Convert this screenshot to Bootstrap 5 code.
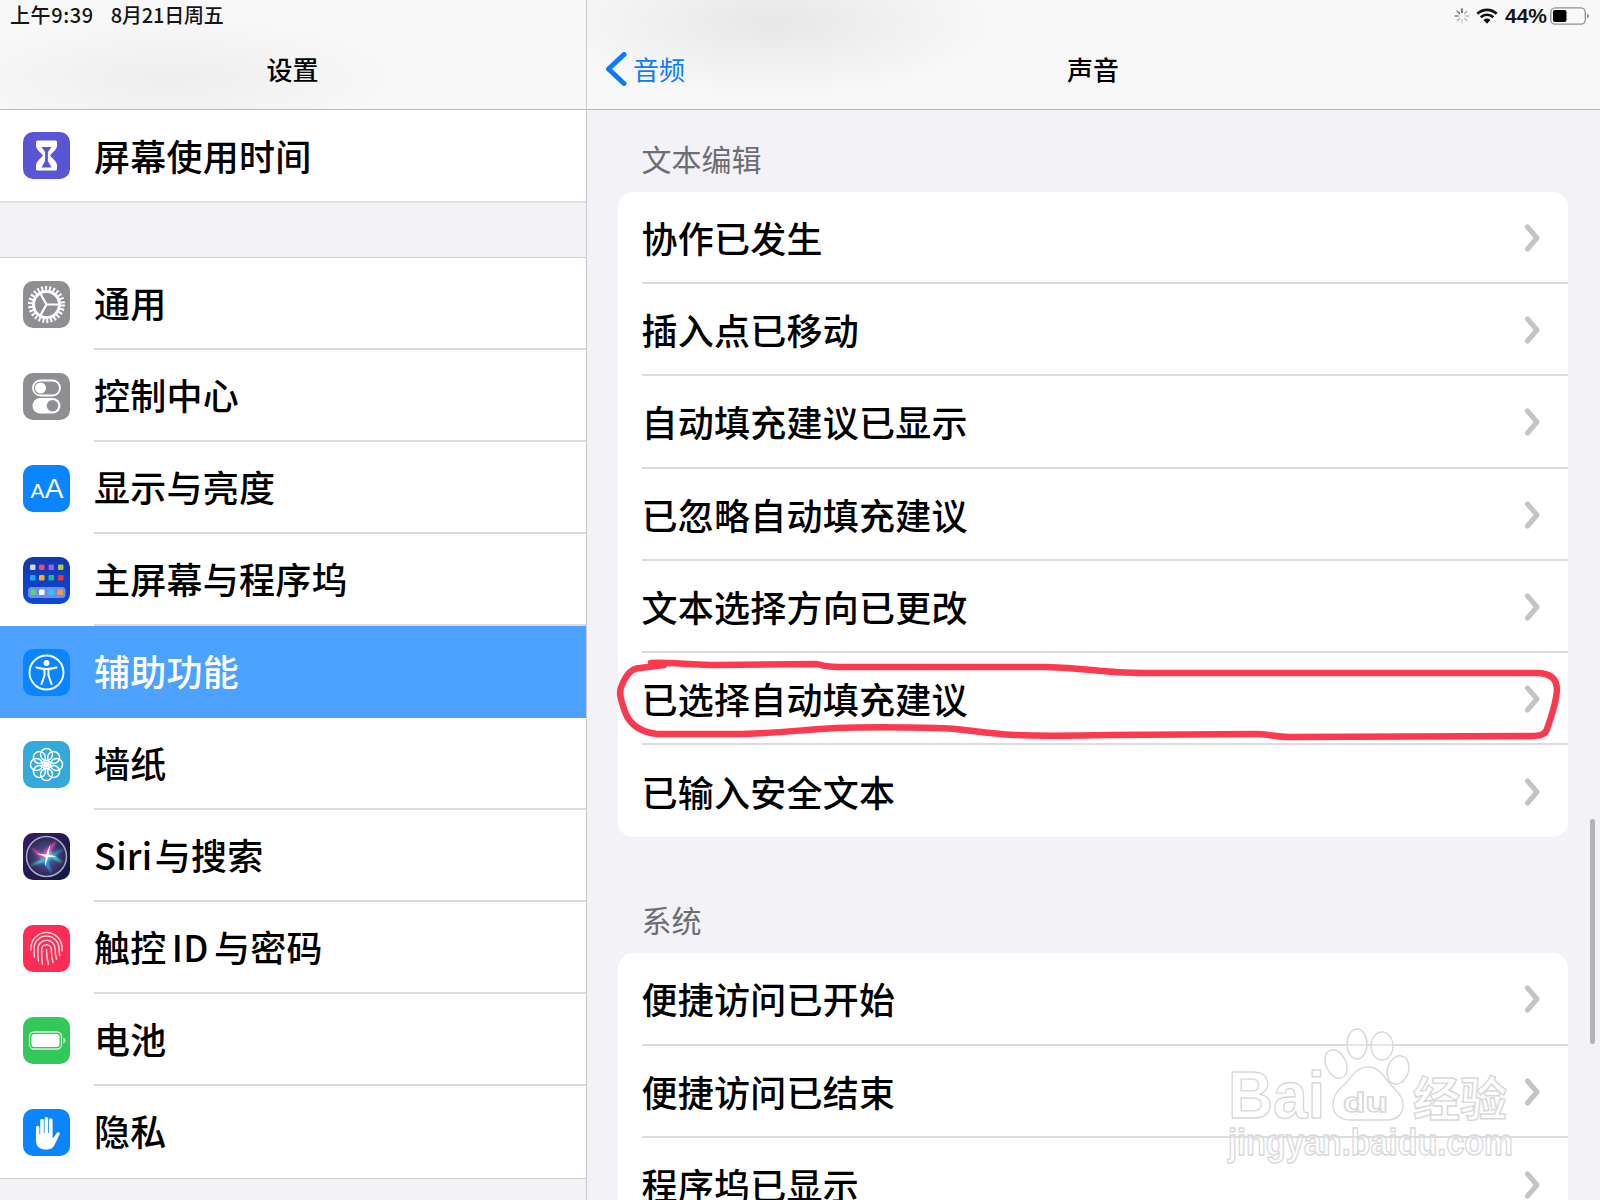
<!DOCTYPE html>
<html lang="zh-CN">
<head>
<meta charset="utf-8">
<title>声音</title>
<link href="https://cdn.jsdelivr.net/npm/bootstrap@5.3.0/dist/css/bootstrap.min.css" rel="stylesheet">
<style>
html,body{margin:0;height:1200px;overflow:hidden;background:#f2f2f7;}
body{font-family:"Noto Sans CJK SC","Liberation Sans",sans-serif;color:#000;}
.stage{width:1600px;height:1200px;overflow:hidden;}
.side{width:587px;height:1200px;border-right:1px solid #c9c9cd;background:#f2f2f7;flex-shrink:0;}
.detail{width:1013px;height:1200px;background:#f2f2f7;}
.bar{height:110px;border-bottom:1px solid #b9b9bd;background-color:#f8f8f9;flex-shrink:0;}
.side .bar{background-image:radial-gradient(ellipse 230px 60px at 170px 78px,#eeeeee,rgba(248,248,249,0));}
.detail .bar{background-image:radial-gradient(ellipse 220px 75px at 185px 22px,#e7e7e7,rgba(248,248,249,0));}
.stat{height:31px;padding:0 10px;font-size:20px;line-height:29px;font-weight:500;color:#161616;}
.stat-time{letter-spacing:.6px;}
.stat-gap{margin-left:17px;letter-spacing:-.2px;}
.stat-wifi{margin-left:6px;}
.stat-pct{font-family:"Liberation Sans",sans-serif;font-weight:700;font-size:21px;margin-left:7px;margin-right:3px;}
.bar-title{height:78px;font-size:26px;font-weight:500;line-height:76px;padding-right:1px;}
.back{left:18px;top:0;color:#0a7aff;font-weight:400;gap:6px;}
.set-group{border-radius:0;background:#fff;flex-shrink:0;}
.set-group .list-group-item,.sheet .list-group-item{background:transparent;border:0;padding:0;height:92px;border-radius:0;font-size:36px;font-weight:500;color:#000;letter-spacing:.25px;}
.sheet .list-group-item{height:92.2px;}
.set-group .list-group-item.on{background:#4da2ff;color:#fff;}
.ico{width:47px;height:47px;margin:0 24px 0 23px;flex-shrink:0;display:block;}
.cell{height:100%;border-bottom:2px solid #dcdcde;line-height:90px;white-space:nowrap;word-spacing:-3px;}
.set-group .cell{line-height:88px;}
.set-group .list-group-item:last-child .cell{border-bottom:0;}
.tight{word-spacing:-6px;}
.group-top .list-group-item{height:91px;}
.group-top .cell{line-height:90px;}
.group-top{border-bottom:2px solid #dfdfe2;}
.group-main{margin-top:54px;border-top:1px solid #cfcfd3;border-bottom:1px solid #cfcfd3;}
.sheet{margin:0 32px 0 31px;background:#fff;border-radius:15px;overflow:hidden;flex-shrink:0;}
.sheet.cut{border-bottom-left-radius:0;border-bottom-right-radius:0;}
.sheet .cell{margin-left:23.5px;padding-right:28px;}
.sheet .list-group-item:last-child .cell{border-bottom:0;}
.sheet-head{height:40px;line-height:40px;margin:28px 0 14px 54.5px;font-size:30px;color:#6d6d72;flex-shrink:0;}
.sheet-head.far{margin-top:62px;}
.nub{width:16px;height:28px;flex-shrink:0;margin-top:2px;}
.overlay{left:0;top:0;width:1600px;height:1200px;pointer-events:none;}
.scroller{left:1590px;top:819px;width:5px;height:225px;background:#b3b3b7;border-radius:3px;}
.wm{fill:rgba(255,255,255,.25);stroke:#d8d8da;stroke-width:1.4;}
.wm-t{font-family:"Liberation Sans","Noto Sans CJK SC",sans-serif;font-weight:700;}
.aa{font-family:"Liberation Sans",sans-serif;fill:#fff;}
</style>
</head>
<body>
<div class="stage d-flex position-relative">
  <div class="side d-flex flex-column">
    <div class="bar">
      <div class="stat d-flex"><span class="stat-time">上午9:39</span><span class="stat-gap">8月21日周五</span></div>
      <div class="bar-title text-center">设置</div>
    </div>
    <div class="list-group set-group group-top">
      <div class="list-group-item d-flex align-items-center">
        <svg class="ico" viewBox="0 0 47 47"><rect width="47" height="47" rx="10" fill="#5856d6"/><path fill="#fff" d="M14.5 8.5h18a1.5 1.5 0 0 1 1.5 1.500v3.500c0 4.500-5 7-7 10 2 3 7 5.500 7 10v3.500a1.500 1.500 0 0 1-1.500 1.500h-18a1.500 1.500 0 0 1-1.500-1.500v-3.500c0-4.500 5-7 7-10-2-3-7-5.500-7-10v-3.500a1.500 1.500 0 0 1 1.500-1.500z"/><path fill="#5856d6" d="M18.500 15h10l-3.600 5v9l3.600 6.500h-10l3.600-6.500v-9z"/></svg>
        <div class="cell flex-grow-1">屏幕使用时间</div>
      </div>
    </div>
    <div class="list-group set-group group-main">
      <div class="list-group-item d-flex align-items-center">
        <svg class="ico" viewBox="0 0 47 47"><rect width="47" height="47" rx="10" fill="#8e8e93"/><circle cx="23.500" cy="23.500" r="16" fill="none" stroke="#fff" stroke-width="5" stroke-dasharray="2 1.870"/><circle cx="23.500" cy="23.500" r="13" fill="none" stroke="#fff" stroke-width="3"/><path fill="none" stroke="#fff" stroke-width="2.200" d="M23.500 23.500H37M23.500 23.500L17 12M23.500 23.500L17 35"/></svg>
        <div class="cell flex-grow-1">通用</div>
      </div>
      <div class="list-group-item d-flex align-items-center">
        <svg class="ico" viewBox="0 0 47 47"><rect width="47" height="47" rx="10" fill="#8e8e93"/><rect x="10" y="7.500" width="27" height="15" rx="7.500" fill="none" stroke="#fff" stroke-width="1.800"/><circle cx="17.500" cy="15" r="5.500" fill="#fff"/><rect x="9.500" y="25" width="28" height="15.500" rx="7.750" fill="#fff"/><circle cx="29.500" cy="32.750" r="5.700" fill="#8e8e93"/></svg>
        <div class="cell flex-grow-1">控制中心</div>
      </div>
      <div class="list-group-item d-flex align-items-center">
        <svg class="ico" viewBox="0 0 47 47"><rect width="47" height="47" rx="10" fill="#0a84ff"/><text class="aa" x="7.500" y="33" font-size="21">A</text><text class="aa" x="21.700" y="33" font-size="28">A</text></svg>
        <div class="cell flex-grow-1">显示与亮度</div>
      </div>
      <div class="list-group-item d-flex align-items-center">
        <svg class="ico" viewBox="0 0 47 47"><defs><linearGradient id="dk" x1="0" y1="0" x2="0" y2="1"><stop offset="0" stop-color="#1438a8"/><stop offset="1" stop-color="#0b48e0"/></linearGradient></defs><rect width="47" height="47" rx="10" fill="url(#dk)"/><rect x="7" y="7.500" width="5.500" height="5.500" rx="1.300" fill="#d5d5dc"/><rect x="16" y="7.500" width="5.500" height="5.500" rx="1.300" fill="#f2496b"/><rect x="25.500" y="7.500" width="5.500" height="5.500" rx="1.300" fill="#a45cf0"/><rect x="35" y="7.500" width="5.500" height="5.500" rx="1.300" fill="#a6cc3a"/><rect x="7" y="18" width="5.500" height="5.500" rx="1.300" fill="#15a8ee"/><rect x="16" y="18" width="5.500" height="5.500" rx="1.300" fill="#f5b50f"/><rect x="25.500" y="18" width="5.500" height="5.500" rx="1.300" fill="#16c08c"/><rect x="35" y="18" width="5.500" height="5.500" rx="1.300" fill="#f0323a"/><rect x="5" y="30" width="37.500" height="11" rx="3.500" fill="#6f8fdc"/><rect x="7.500" y="32.500" width="5.500" height="5.500" rx="1.300" fill="#55d96a"/><rect x="16" y="32.500" width="5.500" height="5.500" rx="1.300" fill="#fff"/><rect x="25.500" y="32.500" width="5.500" height="5.500" rx="1.300" fill="#2cc4f0"/><rect x="34.500" y="32.500" width="5.500" height="5.500" rx="1.300" fill="#f0994a"/></svg>
        <div class="cell flex-grow-1">主屏幕与程序坞</div>
      </div>
      <div class="list-group-item on d-flex align-items-center">
        <svg class="ico" viewBox="0 0 47 47"><rect width="47" height="47" rx="10" fill="#0a84ff"/><circle cx="23.500" cy="23.500" r="17" fill="none" stroke="#fff" stroke-width="1.900"/><circle cx="23.500" cy="14" r="2.900" fill="#fff"/><path fill="none" stroke="#fff" stroke-width="2.100" stroke-linecap="round" stroke-linejoin="round" d="M13.500 18.500c3.500 1 6.500 1.500 10 1.500s6.500-.5 10-1.500M21.500 20v6.500L18.500 35M25.500 20v6.500L28.500 35"/></svg>
        <div class="cell flex-grow-1 border-0">辅助功能</div>
      </div>
      <div class="list-group-item d-flex align-items-center">
        <svg class="ico" viewBox="0 0 47 47"><rect width="47" height="47" rx="10" fill="#35a9dc"/><g fill="none" stroke="#fff" stroke-width="1.500"><circle cx="23.500" cy="23.500" r="2.500" fill="#fff"/><circle cx="23.500" cy="13.500" r="6"/><circle cx="23.500" cy="33.500" r="6"/><circle cx="13.500" cy="23.500" r="6"/><circle cx="33.500" cy="23.500" r="6"/><circle cx="16.400" cy="16.400" r="6"/><circle cx="30.600" cy="16.400" r="6"/><circle cx="16.400" cy="30.600" r="6"/><circle cx="30.600" cy="30.600" r="6"/></g></svg>
        <div class="cell flex-grow-1">墙纸</div>
      </div>
      <div class="list-group-item d-flex align-items-center">
        <svg class="ico" viewBox="0 0 47 47"><defs><linearGradient id="sb" x1="0" y1="0" x2="1" y2="1"><stop offset="0" stop-color="#3b1a66"/><stop offset="1" stop-color="#0e1b3d"/></linearGradient><radialGradient id="sc"><stop offset="0" stop-color="#5a6aa0"/><stop offset="1" stop-color="#2c2254"/></radialGradient><filter id="sf" x="-20%" y="-20%" width="140%" height="140%"><feGaussianBlur stdDeviation=".9"/></filter></defs><rect width="47" height="47" rx="10" fill="url(#sb)"/><circle cx="23.500" cy="23.500" r="20" fill="url(#sc)" stroke="#a9a9c4" stroke-width="1.500"/><g filter="url(#sf)"><path fill="#ec45a8" d="M7 14l17 9.500-6 2zM34 7l-9 17-6-4z"/><path fill="#35e0cc" d="M6 33l18-9.500 3 4zM40 30L23.500 23.500l4-5z"/><path fill="#3f9ff0" d="M29 41l-5.500-17.500-5 3zM42 15l-18.500 8.500 3 3z"/></g><path fill="#fff" d="M27.500 11l-2 10.500 8 2-8.500 1-3 9 .5-9.500-9-3.500 9.500 1z"/></svg>
        <div class="cell flex-grow-1 tight">Siri 与搜索</div>
      </div>
      <div class="list-group-item d-flex align-items-center">
        <svg class="ico" viewBox="0 0 47 47"><rect width="47" height="47" rx="10" fill="#ff2d55"/><g fill="none" stroke="#fbd5dc" stroke-width="1.500" stroke-linecap="round"><path d="M23.500 24.500c0 5 .5 10 2 15"/><path d="M19.500 39c-1-5-.8-10-.8-14.500a4.800 4.800 0 0 1 9.600 0c0 4 .3 8 1.700 13"/><path d="M15.500 36c-.5-4-.7-8-.7-12a8.700 8.700 0 0 1 17.400 0c0 4 .4 7 1.300 10"/><path d="M11.500 32c-.4-3-.5-6-.5-8.500a12.500 12.500 0 0 1 25 0c0 2.500.2 5 .7 7"/><path d="M8 25v-2a15.500 15.500 0 0 1 31 0v3"/></g></svg>
        <div class="cell flex-grow-1">触控 ID 与密码</div>
      </div>
      <div class="list-group-item d-flex align-items-center">
        <svg class="ico" viewBox="0 0 47 47"><rect width="47" height="47" rx="10" fill="#34c759"/><rect x="6.500" y="15" width="32" height="17" rx="4.500" fill="none" stroke="#d6f3dd" stroke-width="1.300"/><rect x="8.500" y="17" width="28" height="13" rx="3" fill="#fff"/><path fill="#d6f3dd" d="M40.500 20.500c1.200.6 1.800 1.800 1.800 3s-.6 2.400-1.800 3z"/></svg>
        <div class="cell flex-grow-1">电池</div>
      </div>
      <div class="list-group-item d-flex align-items-center">
        <svg class="ico" viewBox="0 0 47 47"><rect width="47" height="47" rx="10" fill="#0a84ff"/><path fill="#fff" d="M13 18.500a1.700 1.700 0 0 1 3.400 0V25h.8V11.500a1.800 1.800 0 0 1 3.600 0V24h.8V9.800a1.800 1.800 0 0 1 3.600 0V24h.8V11a1.800 1.800 0 0 1 3.600 0v17c0 .8.700 1 1.200.4l2.500-3.900c.8-1.200 1.800-1.600 2.800-1.100.9.500.8 1.500.2 2.500L31.500 36c-1.500 3-4 4.500-7.500 4.500h-2.500c-5 0-8.500-3.500-8.500-9z"/></svg>
        <div class="cell flex-grow-1">隐私</div>
      </div>
    </div>
  </div>

  <div class="detail d-flex flex-column">
    <div class="bar">
      <div class="stat d-flex align-items-center justify-content-end">
        <svg width="16" height="16" viewBox="0 0 16 16"><g stroke="#8e8e8e" stroke-width="1.300" stroke-linecap="round"><path d="M8 1v3.500" stroke="#333"/><path d="M12.900 3.100l-2.400 2.400" stroke="#aaa"/><path d="M15 8h-3.500" stroke="#bbb"/><path d="M12.900 12.900l-2.400-2.400" stroke="#bbb"/><path d="M8 15v-3.500" stroke="#ccc"/><path d="M3.100 12.900l2.400-2.400" stroke="#aaa"/><path d="M1 8h3.500" stroke="#888"/><path d="M3.100 3.100l2.400 2.400" stroke="#666"/></g></svg>
        <svg width="22" height="16" viewBox="0 0 22 16" class="stat-wifi"><g fill="none" stroke="#111" stroke-width="2.600"><path d="M1.300 5.800a14 14 0 0 1 19.400 0"/><path d="M4.700 9.200a9.200 9.200 0 0 1 12.600 0"/></g><path fill="#111" d="M7.500 12a5 5 0 0 1 7 0L11 15.800z"/></svg>
        <span class="stat-pct">44%</span>
        <svg width="40" height="18" viewBox="0 0 40 18"><rect x=".8" y=".8" width="34.500" height="16.400" rx="4.500" fill="none" stroke="#8f8f8f" stroke-width="1.300"/><rect x="3" y="3" width="13.500" height="12" rx="2" fill="#000"/><path fill="#8f8f8f" d="M37 6.500c1.200.4 1.800 1.400 1.800 2.500s-.6 2.100-1.800 2.500z"/></svg>
      </div>
      <div class="bar-title text-center position-relative">
        <div class="back position-absolute d-flex align-items-center">
          <svg width="22" height="34" viewBox="0 0 22 34"><path d="M19 2.500L3.500 17 19 31.500" fill="none" stroke="#0a7aff" stroke-width="5" stroke-linecap="round" stroke-linejoin="round"/></svg>
          <span>音频</span>
        </div>
        声音
      </div>
    </div>

    <div class="sheet-head">文本编辑</div>
    <div class="sheet list-group">
      <div class="list-group-item"><div class="cell d-flex align-items-center justify-content-between"><span>协作已发生</span><svg class="nub" viewBox="0 0 16 28"><path d="M3.500 3l9.500 11-9.500 11" fill="none" stroke="#c4c4c7" stroke-width="5" stroke-linecap="round" stroke-linejoin="round"/></svg></div></div>
      <div class="list-group-item"><div class="cell d-flex align-items-center justify-content-between"><span>插入点已移动</span><svg class="nub" viewBox="0 0 16 28"><path d="M3.500 3l9.500 11-9.500 11" fill="none" stroke="#c4c4c7" stroke-width="5" stroke-linecap="round" stroke-linejoin="round"/></svg></div></div>
      <div class="list-group-item"><div class="cell d-flex align-items-center justify-content-between"><span>自动填充建议已显示</span><svg class="nub" viewBox="0 0 16 28"><path d="M3.500 3l9.500 11-9.500 11" fill="none" stroke="#c4c4c7" stroke-width="5" stroke-linecap="round" stroke-linejoin="round"/></svg></div></div>
      <div class="list-group-item"><div class="cell d-flex align-items-center justify-content-between"><span>已忽略自动填充建议</span><svg class="nub" viewBox="0 0 16 28"><path d="M3.500 3l9.500 11-9.500 11" fill="none" stroke="#c4c4c7" stroke-width="5" stroke-linecap="round" stroke-linejoin="round"/></svg></div></div>
      <div class="list-group-item"><div class="cell d-flex align-items-center justify-content-between"><span>文本选择方向已更改</span><svg class="nub" viewBox="0 0 16 28"><path d="M3.500 3l9.500 11-9.500 11" fill="none" stroke="#c4c4c7" stroke-width="5" stroke-linecap="round" stroke-linejoin="round"/></svg></div></div>
      <div class="list-group-item"><div class="cell d-flex align-items-center justify-content-between"><span>已选择自动填充建议</span><svg class="nub" viewBox="0 0 16 28"><path d="M3.500 3l9.500 11-9.500 11" fill="none" stroke="#c4c4c7" stroke-width="5" stroke-linecap="round" stroke-linejoin="round"/></svg></div></div>
      <div class="list-group-item"><div class="cell d-flex align-items-center justify-content-between"><span>已输入安全文本</span><svg class="nub" viewBox="0 0 16 28"><path d="M3.500 3l9.500 11-9.500 11" fill="none" stroke="#c4c4c7" stroke-width="5" stroke-linecap="round" stroke-linejoin="round"/></svg></div></div>
    </div>

    <div class="sheet-head far">系统</div>
    <div class="sheet cut list-group">
      <div class="list-group-item"><div class="cell d-flex align-items-center justify-content-between"><span>便捷访问已开始</span><svg class="nub" viewBox="0 0 16 28"><path d="M3.500 3l9.500 11-9.500 11" fill="none" stroke="#c4c4c7" stroke-width="5" stroke-linecap="round" stroke-linejoin="round"/></svg></div></div>
      <div class="list-group-item"><div class="cell d-flex align-items-center justify-content-between"><span>便捷访问已结束</span><svg class="nub" viewBox="0 0 16 28"><path d="M3.500 3l9.500 11-9.500 11" fill="none" stroke="#c4c4c7" stroke-width="5" stroke-linecap="round" stroke-linejoin="round"/></svg></div></div>
      <div class="list-group-item"><div class="cell d-flex align-items-center justify-content-between"><span>程序坞已显示</span><svg class="nub" viewBox="0 0 16 28"><path d="M3.500 3l9.500 11-9.500 11" fill="none" stroke="#c4c4c7" stroke-width="5" stroke-linecap="round" stroke-linejoin="round"/></svg></div></div>
    </div>
  </div>

  <div class="scroller position-absolute"></div>

  <svg class="overlay position-absolute" viewBox="0 0 1600 1200">
    <path fill="none" stroke="#fb3a50" stroke-width="6.500" stroke-linecap="round" stroke-linejoin="round" d="M651 663C670 662 690 665 720 665L817 664C830 668 840 667 860 667L1046 667C1075 668 1090 670 1104 671C1120 673 1140 673 1155 673L1536 673C1552 673 1557 680 1557 690C1556 705 1550 720 1547 729C1545 735 1540 736 1530 736L1289 737C1275 737 1270 734 1255 734L1110 735C1060 736 1040 736 1015 735C980 733 960 728 938 728C900 727 860 727 836 728C800 730 770 734 734 734L657 734C640 732 630 725 625 712C621 700 618 692 622 685C626 675 632 668 640 668C650 667 655 666 664 665"/>
    <g class="wm">
      <ellipse cx="1357" cy="1044" rx="10" ry="15"/>
      <ellipse cx="1382" cy="1046" rx="11" ry="14"/>
      <ellipse cx="1336" cy="1064" rx="10" ry="15" transform="rotate(-25 1336 1064)"/>
      <ellipse cx="1398" cy="1070" rx="10.500" ry="14.500" transform="rotate(18 1398 1070)"/>
      <path d="M1368 1067c-12 0-16 10-24 18-8 7-11 12-11 20 0 10 8 15 18 15h36c10 0 16-6 16-15 0-8-5-13-12-20-7-7-11-18-23-18z"/>
      <text class="wm-t" x="1228" y="1118" font-size="66" textLength="97" lengthAdjust="spacingAndGlyphs">Bai</text>
      <text class="wm-t" x="1343" y="1112" font-size="28" textLength="45" lengthAdjust="spacingAndGlyphs">du</text>
      <text class="wm-t" x="1413" y="1116" font-size="47">经验</text>
      <text class="wm-t" x="1228" y="1155" font-size="37" textLength="285" lengthAdjust="spacingAndGlyphs" font-weight="400">jingyan.baidu.com</text>
    </g>
  </svg>
</div>
<script src="https://cdn.jsdelivr.net/npm/bootstrap@5.3.0/dist/js/bootstrap.bundle.min.js"></script>
</body>
</html>
